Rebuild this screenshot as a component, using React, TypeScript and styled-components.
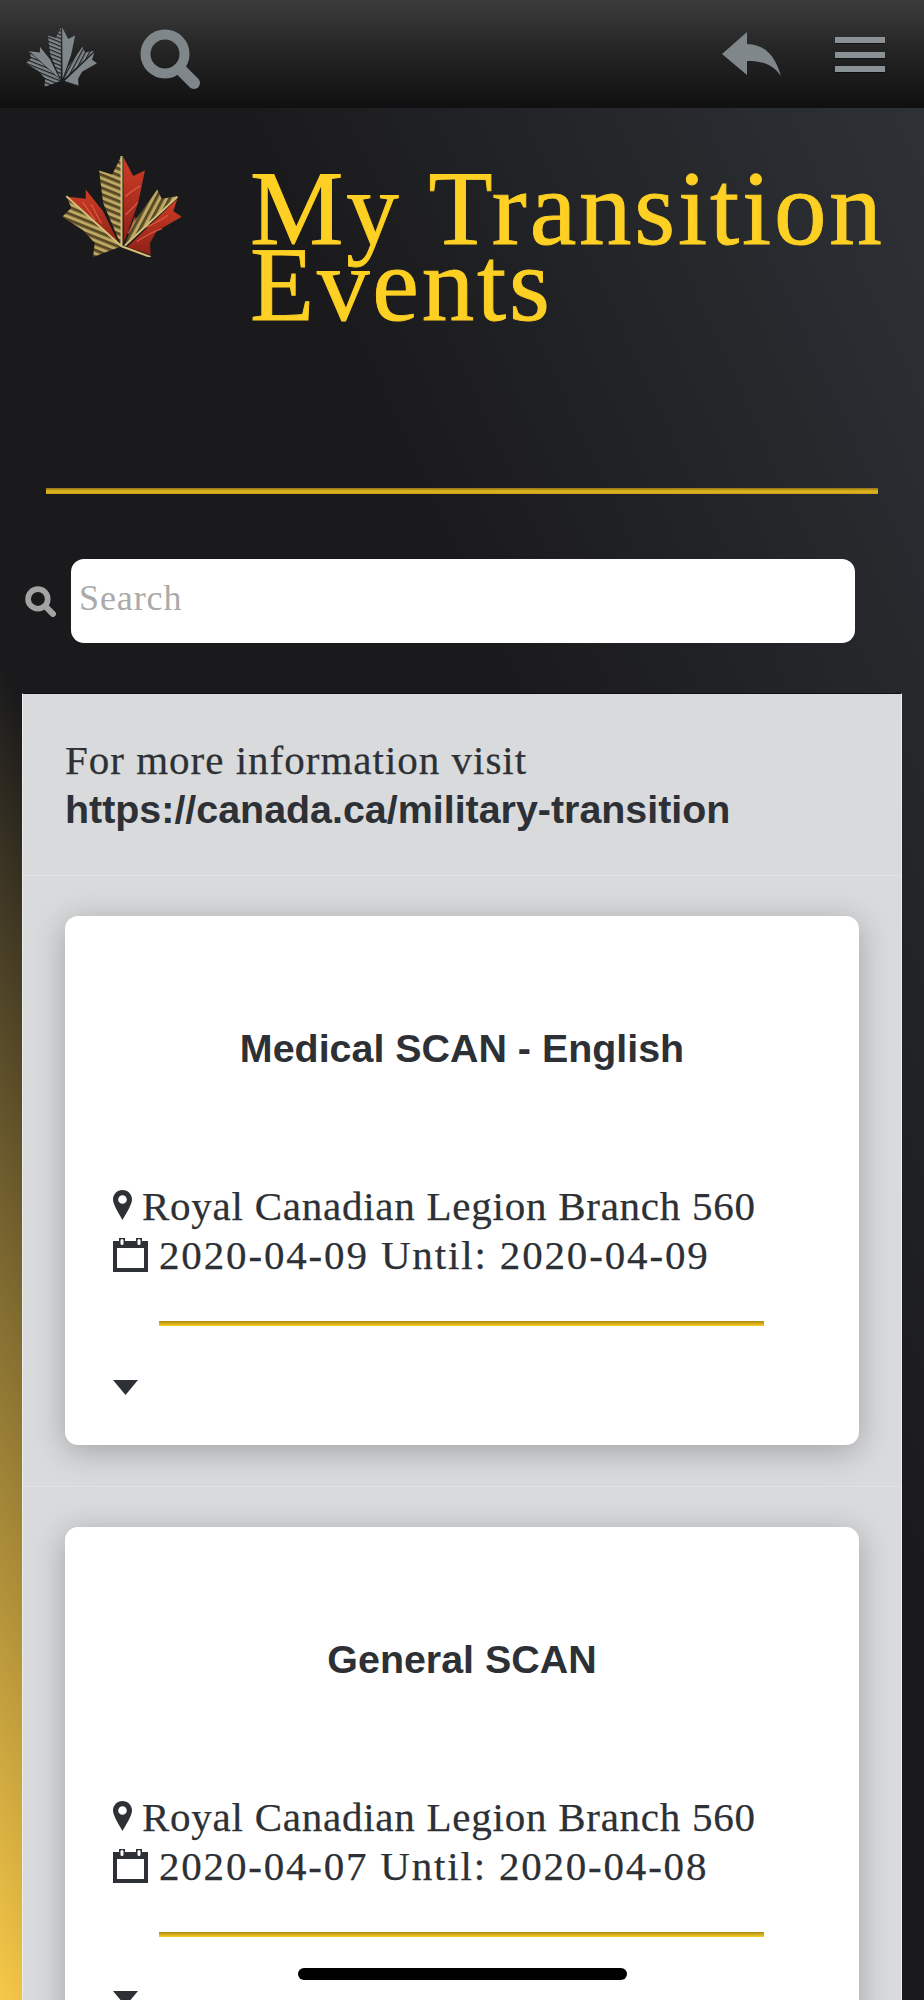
import React from "react";
import styled, { createGlobalStyle } from "styled-components";

const serif = `"Liberation Serif", "Times New Roman", serif`;
const sans = `"Liberation Sans", Arial, sans-serif`;

const Global = createGlobalStyle`
  html, body { margin: 0; padding: 0; }
  body { width: 924px; height: 2000px; overflow: hidden; background: #1a1a1c; }
`;

const Page = styled.div`
  position: relative;
  width: 924px;
  height: 2000px;
  overflow: hidden;
  background: linear-gradient(to top right, #f6c847 0%, #1a1a1c 33.5%, #1a1a1c 60%, #2f3338 100%);
`;

const TopBar = styled.header`
  height: 108px;
  box-sizing: border-box;
  display: flex;
  align-items: center;
  padding: 0 39px 0 25px;
  background: linear-gradient(to bottom, #3c3c3d 0%, #232324 50%, #101011 100%);
`;

const NavLeaf = styled.svg`
  width: 73px;
  height: 60px;
  margin-top: 6px;
`;

const NavSearch = styled.svg`
  width: 60px;
  height: 60px;
  margin-left: 42px;
  margin-top: 10px;
`;

const Spacer = styled.div`
  flex: 1;
`;

const NavReply = styled.svg`
  width: 59px;
  height: 44px;
  margin-right: 54px;
`;

const Burger = styled.div`
  width: 50px;
  display: flex;
  flex-direction: column;
  gap: 8.5px;
  margin-top: 1px;
`;

const BurgerBar = styled.span`
  display: block;
  height: 6px;
  background: #8b9295;
  box-shadow: 0 1px 0 rgba(0, 0, 0, 0.5);
`;

const Hero = styled.section`
  display: flex;
  align-items: flex-start;
  height: 380px;
  box-sizing: border-box;
  padding: 48px 0 0 62px;
`;

const HeroLeaf = styled.svg`
  width: 120px;
  height: 101px;
  flex: none;
`;

const PageTitle = styled.h1`
  margin: 15px 0 0 68px;
  font-family: ${serif};
  font-weight: 400;
  font-size: 105px;
  line-height: 76px;
  color: #fdd023;
  white-space: nowrap;
  letter-spacing: 2.8px;
  -webkit-text-stroke: 0.9px #fdd023;
`;

const GoldRule = styled.div`
  height: 6px;
  margin: 0 46px;
  background: linear-gradient(to bottom, #8f7414 0%, #e2b71f 55%, #c7a11c 100%);
`;

const SearchRow = styled.div`
  display: flex;
  align-items: center;
  margin: 65px 69px 0 25px;
`;

const SearchGlyph = styled.svg`
  width: 31px;
  height: 31px;
  flex: none;
  margin: 0 15px 0 0;
`;

const SearchInput = styled.input`
  flex: 1;
  min-width: 0;
  height: 84px;
  box-sizing: border-box;
  border: 0;
  border-radius: 13px;
  background: #fff;
  padding: 0 8px 7px;
  font-family: ${serif};
  font-size: 36px;
  letter-spacing: 0.9px;
  outline: none;
  &::placeholder {
    color: #aaaaaa;
    opacity: 1;
  }
`;

const Panel = styled.main`
  margin: 50px 22px 0;
  background: #d9dadc;
  border-top: 1px solid #0f0f10;
  border-left: 1px solid #eceded;
  border-right: 1px solid #eceded;
`;

const Intro = styled.div`
  box-sizing: border-box;
  height: 181px;
  padding: 41px 42px 0;
  color: #2d3035;
`;

const IntroLine = styled.div`
  font-family: ${serif};
  font-size: 41px;
  line-height: 50px;
  letter-spacing: 1px;
  white-space: nowrap;
  -webkit-text-stroke: 0.25px #2d3035;
`;

const IntroLink = styled.div`
  font-family: ${sans};
  font-weight: 700;
  font-size: 39.4px;
  line-height: 49px;
  white-space: nowrap;
`;

const EventRow = styled.div`
  border-top: 1px solid #e1e2e3;
  padding: 40px 42px 41px;
`;

const Card = styled.article`
  box-sizing: border-box;
  height: 529px;
  background: #fff;
  border-radius: 13px;
  padding: 110px 48px 0;
  box-shadow: 0 6px 32px rgba(0, 0, 0, 0.26);
  color: #2d3035;
`;

const CardTitle = styled.h2`
  margin: 0;
  height: 44px;
  font-family: ${sans};
  font-weight: 700;
  font-size: 39.4px;
  line-height: 44px;
  text-align: center;
  white-space: nowrap;
`;

const InfoBlock = styled.div`
  margin-top: 112px;
`;

const InfoLine = styled.div<{ $spacing: number }>`
  display: flex;
  align-items: center;
  height: 49px;
  font-family: ${serif};
  font-size: 41px;
  line-height: 49px;
  letter-spacing: ${(p) => p.$spacing}px;
  white-space: nowrap;
  -webkit-text-stroke: 0.25px #2d3035;
`;

const PinIcon = styled.svg`
  width: 19px;
  height: 30px;
  flex: none;
  margin-right: 10px;
  margin-top: -3px;
`;

const CalIcon = styled.svg`
  width: 35px;
  height: 34px;
  flex: none;
  margin-right: 11px;
  margin-top: -1px;
`;

const CardRule = styled.div`
  height: 5px;
  margin: 41px 47px 0 46px;
  background: linear-gradient(to bottom, #a98a16 0%, #fdd023 100%);
`;

const Caret = styled.svg`
  display: block;
  width: 25px;
  height: 15px;
  margin-top: 54px;
`;

const HomeBar = styled.div`
  position: absolute;
  left: 298px;
  top: 1968px;
  width: 329px;
  height: 12px;
  border-radius: 6px;
  background: #000;
`;

const Leaf = ({ tone }: { tone: "gold" | "grey" }) => {
  const id = tone;
  const grey = tone === "grey";
  const hatchA = grey ? "#7f878b" : "#bfa862";
  const hatchB = grey ? "#1e1e1f" : "#5a4b28";
  const red1 = grey ? "#7f878b" : "#cf3d28";
  const red2 = grey ? "#7f878b" : "#8e2015";
  const spine = grey ? "#2a2a2b" : "#d6c077";
  const band = grey ? 6 : 9;
  return (
    <>
      <defs>
        <pattern id={`${id}-s1`} width="18" height="18" patternUnits="userSpaceOnUse" patternTransform="rotate(22)">
          <rect width="18" height="18" fill={hatchA} />
          <rect width="18" height={band} fill={hatchB} />
        </pattern>
        <pattern id={`${id}-s2`} width="18" height="18" patternUnits="userSpaceOnUse" patternTransform="rotate(-62)">
          <rect width="18" height="18" fill={hatchA} />
          <rect width="18" height={band} fill={hatchB} />
        </pattern>
        <linearGradient id={`${id}-r`} x1="0" y1="0" x2="0" y2="1">
          <stop offset="0" stopColor={red1} />
          <stop offset="1" stopColor={red2} />
        </linearGradient>
      </defs>
      <polygon points="55,172 108,178 108,150 160,215 207,312" fill={`url(#${id}-r)`} />
      <polygon points="50,170 65,205 38,232 100,272 135,310 130,352 215,320" fill={`url(#${id}-s1)`} />
      <polygon points="215,50 187,105 148,93 160,190 213,315" fill={`url(#${id}-s1)`} />
      <polygon points="220,52 250,110 285,93 265,190 222,310" fill={`url(#${id}-r)`} />
      <polygon points="322,150 335,178 382,170 225,315 250,250" fill={`url(#${id}-s2)`} />
      <polygon points="382,178 370,215 395,232 320,275 300,310 302,345 232,322" fill={`url(#${id}-r)`} />
      {!grey && (
        <path
          d="M228 170C240 160 252 150 270 140M228 225C240 212 250 205 262 190M235 280C245 265 250 250 255 235M262 305C285 290 310 275 335 268M290 262C310 252 330 245 352 228M125 195C135 215 145 235 155 250M100 190C112 205 125 225 135 240"
          stroke="#e8664a"
          strokeWidth="4"
          strokeLinecap="round"
          fill="none"
          opacity="0.75"
        />
      )}
      <path
        d="M215 50V320M50 170L215 320M382 172L225 318M215 320L302 352"
        stroke={spine}
        strokeWidth={grey ? 2 : 6}
        fill="none"
      />
    </>
  );
};

const events = [
  { title: "Medical SCAN - English", date: "2020-04-09 Until: 2020-04-09", spacing: 1.85 },
  { title: "General SCAN", date: "2020-04-07 Until: 2020-04-08", spacing: 1.8 },
];

export default function App() {
  return (
    <Page>
      <Global />
      <TopBar>
        <NavLeaf viewBox="38 50 357 302">
          <Leaf tone="grey" />
        </NavLeaf>
        <NavSearch viewBox="0 0 60 60" fill="none">
          <circle cx="25" cy="25" r="19.5" stroke="#7f878b" strokeWidth="10" />
          <path d="M40 40L54 54" stroke="#7f878b" strokeWidth="12" strokeLinecap="round" />
        </NavSearch>
        <Spacer />
        <NavReply viewBox="0 0 59 44">
          <path d="M0 22L25 0V12C47 13 54 28 59 44C51 33 42 29 25 29V43Z" fill="#7f878b" />
        </NavReply>
        <Burger>
          <BurgerBar />
          <BurgerBar />
          <BurgerBar />
        </Burger>
      </TopBar>
      <Hero>
        <HeroLeaf viewBox="38 50 357 302">
          <Leaf tone="gold" />
        </HeroLeaf>
        <PageTitle>
          My Transition
          <br />
          Events
        </PageTitle>
      </Hero>
      <GoldRule />
      <SearchRow>
        <SearchGlyph viewBox="0 0 60 60" fill="none">
          <circle cx="25" cy="25" r="19" stroke="#a3a3a3" strokeWidth="11" />
          <path d="M40 40L54 54" stroke="#a3a3a3" strokeWidth="12" strokeLinecap="round" />
        </SearchGlyph>
        <SearchInput placeholder="Search" />
      </SearchRow>
      <Panel>
        <Intro>
          <IntroLine>For more information visit</IntroLine>
          <IntroLink>https://canada.ca/military-transition</IntroLink>
        </Intro>
        {events.map((e) => (
          <EventRow key={e.title}>
            <Card>
              <CardTitle>{e.title}</CardTitle>
              <InfoBlock>
                <InfoLine $spacing={0.75}>
                  <PinIcon viewBox="0 0 19 30">
                    <path
                      fillRule="evenodd"
                      d="M9.5 0C4.2 0 0 4.2 0 9.5C0 14.5 5.5 23 9.5 30C13.5 23 19 14.5 19 9.5C19 4.2 14.8 0 9.5 0ZM9.5 5.2A4.3 4.3 0 1 1 9.5 13.8A4.3 4.3 0 1 1 9.5 5.2Z"
                      fill="#2d3035"
                    />
                  </PinIcon>
                  Royal Canadian Legion Branch 560
                </InfoLine>
                <InfoLine $spacing={e.spacing}>
                  <CalIcon viewBox="0 0 35 34">
                    <path
                      fillRule="evenodd"
                      d="M0 3H6V0H12V3H23V0H29V3H35V34H0ZM4 10V30H31V10Z"
                      fill="#2d3035"
                    />
                    <rect x="7.5" y="1" width="3" height="6" rx="1.5" fill="#fff" />
                    <rect x="24.5" y="1" width="3" height="6" rx="1.5" fill="#fff" />
                  </CalIcon>
                  {e.date}
                </InfoLine>
              </InfoBlock>
              <CardRule />
              <Caret viewBox="0 0 25 15">
                <path d="M0 0H25L12.5 15Z" fill="#2d3035" />
              </Caret>
            </Card>
          </EventRow>
        ))}
      </Panel>
      <HomeBar />
    </Page>
  );
}
